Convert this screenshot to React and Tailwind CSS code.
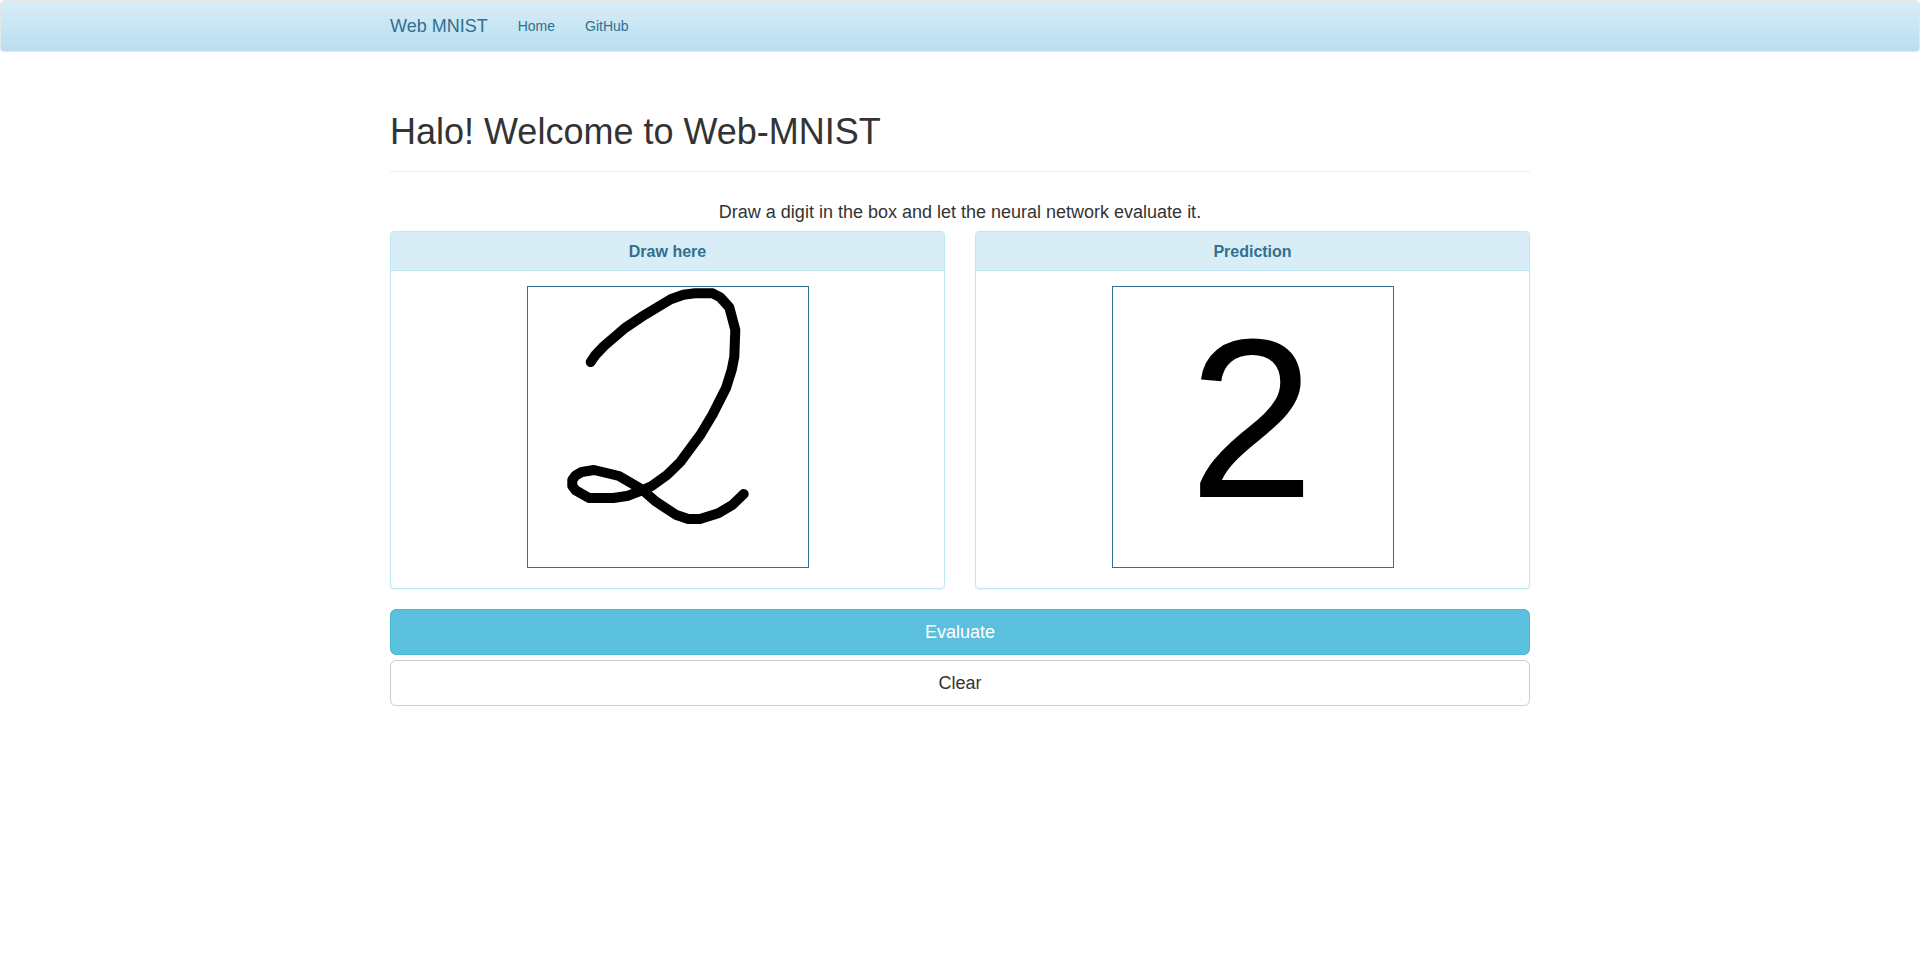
const strokePoints =
  "62.7,75 67.7,67.7 76,59 97,41 117,27.7 142.7,12.3 155.3,7.7 167,6.3 184.7,6.3 192.3,10.3 201.3,20.3 207.3,43 206.3,69.7 203.7,83 198,101 184.6,127.5 172.6,147.5 152.3,175 139,188 123.7,199 114.7,203 100.3,208.7 85.3,211 61,211 47.7,203.3 44.3,199 44.3,193 47.7,188.3 53.7,185 66,183 91,189 113.7,202.3 128,214.7 147.7,227.7 160.3,232 172,232 190.3,226.3 204.3,218 215.7,207";

function NavBar() {
  return (
    <nav className="rounded border border-[#e7e7e7] bg-linear-to-b from-[#d9edf7] to-[#b9def0] text-[#31708f]">
      <div className="mx-auto flex max-w-[1170px] items-center gap-[30px] px-[15px] py-[15px] text-sm leading-5">
        <a href="#" className="text-lg leading-5">
          Web MNIST
        </a>
        <a href="#home">Home</a>
        <a href="#github">GitHub</a>
      </div>
    </nav>
  );
}

function Panel({ title, children }) {
  return (
    <section className="rounded border border-[#bce8f1] bg-white shadow-[0_1px_2px_rgba(0,0,0,0.05)]">
      <h3 className="rounded-t-[3px] border-b border-[#bce8f1] bg-[#d9edf7] pt-2.5 pb-2 text-center text-base leading-5 font-bold text-[#31708f]">
        {title}
      </h3>
      <div className="flex justify-center px-[15px] pt-[15px] pb-5">
        <div className="size-[282px] border border-[#31708f] text-black">{children}</div>
      </div>
    </section>
  );
}

export default function App() {
  return (
    <div className="font-['Liberation_Sans',Arial,sans-serif] text-[#333]">
      <NavBar />
      <main className="mx-auto max-w-[1170px] px-[15px] pt-[60px] pb-5">
        <header className="mb-[30px] border-b border-[#eee] pb-[19px]">
          <h1 className="text-4xl leading-10 font-medium">Halo! Welcome to Web-MNIST</h1>
        </header>
        <p className="mb-[9px] text-center text-lg leading-5">
          Draw a digit in the box and let the neural network evaluate it.
        </p>
        <div className="mb-5 grid gap-[30px] md:grid-cols-2">
          <Panel title="Draw here">
            <svg
              viewBox="0 0 280 280"
              className="size-full"
              role="img"
              aria-label="Drawn digit"
              fill="none"
              stroke="currentColor"
              strokeWidth="10"
              strokeLinecap="round"
              strokeLinejoin="round"
            >
              <polyline points={strokePoints} />
            </svg>
          </Panel>
          <Panel title="Prediction">
            <output className="block pr-[2px] text-center text-[226px] leading-[264px]">2</output>
          </Panel>
        </div>
        <div className="flex flex-col gap-[5px] text-lg leading-6">
          <button
            type="button"
            className="rounded-md border border-[#46b8da] bg-[#5bc0de] px-4 py-2.5 text-white"
          >
            Evaluate
          </button>
          <button
            type="button"
            className="rounded-md border border-[#ccc] bg-white px-4 py-2.5"
          >
            Clear
          </button>
        </div>
      </main>
    </div>
  );
}
